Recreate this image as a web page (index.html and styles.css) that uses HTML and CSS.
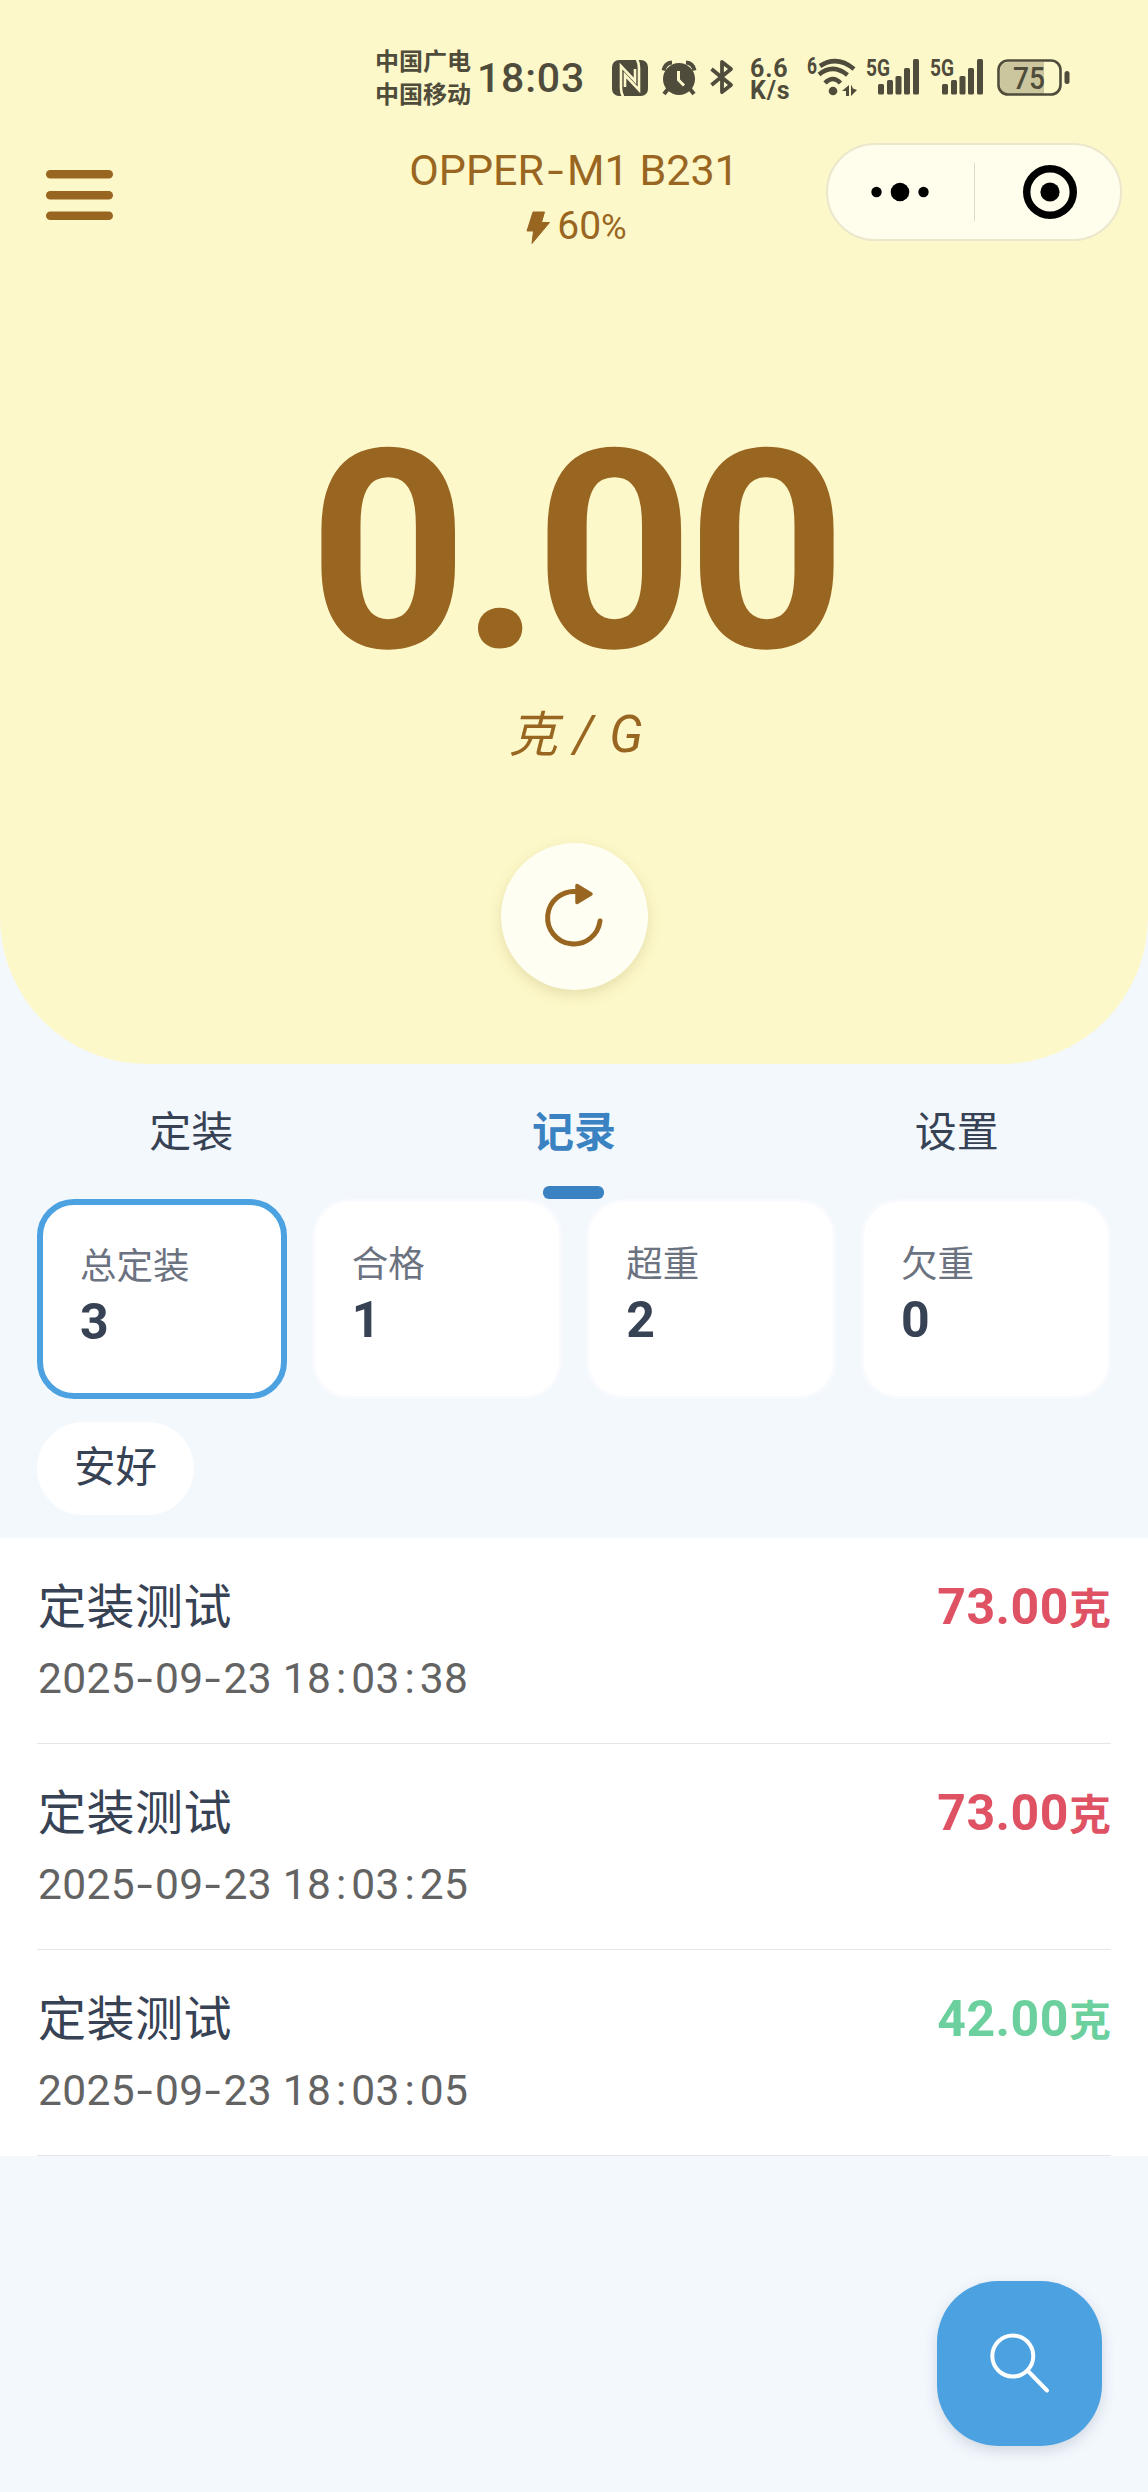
FILE: index.html
```html
<!DOCTYPE html>
<html lang="zh-CN">
<head>
<meta charset="utf-8">
<title>OPPER-M1 B231</title>
<link rel="stylesheet" href="styles.css">
</head>
<body>
<main class="app">
  <section class="hero">
    <div class="status">
      <div class="carriers"><span>中国广电</span><span>中国移动</span></div>
      <div class="clock">18:03</div>
      <svg class="nfc" width="36" height="36" viewBox="0 0 36 36">
        <rect width="36" height="36" rx="7" fill="currentColor"/>
        <g fill="none" stroke="#fdf8c9" stroke-width="2.600">
          <path d="M11 36.500Q9 33 9 28V6L23 21V9"/>
          <path d="M25 -.5Q27 3 27 8V30L13 15V27"/>
        </g>
      </svg>
      <svg class="alarm" width="36" height="36" viewBox="0 0 36 36">
        <path d="M2.500 10.500Q4 3 11 2.500M33.500 10.500Q32 3 25 2.500" fill="none" stroke="currentColor" stroke-width="4"/>
        <path d="M7 29l-4 5M29 29l4 5" stroke="currentColor" stroke-width="4"/>
        <circle cx="18" cy="19" r="16" fill="currentColor"/>
        <path d="M17.500 11v9l5.500 5.500" fill="none" stroke="#fdf8c9" stroke-width="3"/>
      </svg>
      <svg class="bluetooth" width="24" height="36" viewBox="0 0 24 36">
        <path d="M1.500 10L21 26 12 33V3l9 7L1.500 26" fill="none" stroke="currentColor" stroke-width="3.800" stroke-linejoin="round"/>
      </svg>
      <div class="speed"><span>6.6</span><span>K/s</span></div>
      <svg class="wifi" width="50" height="40" viewBox="0 0 50 40">
        <text x="0" y="16" class="tag" textLength="10" lengthAdjust="spacingAndGlyphs">6</text>
        <g fill="none" stroke="currentColor" stroke-width="4.500">
          <path d="M13 8Q30-3 47 11"/>
          <path d="M12 16.500Q26 5 40.500 17"/>
          <path d="M18 25Q26 17 33.500 25"/>
        </g>
        <circle cx="26" cy="33" r="4.300" fill="currentColor"/>
        <path d="M42 27v11h-3v-5h-4zM44 38V26.500l2 4 4 1.500z" fill="currentColor"/>
      </svg>
      <svg class="signal" width="54" height="38" viewBox="0 0 54 38">
        <text x="0" y="18" class="tag" textLength="24" lengthAdjust="spacingAndGlyphs">5G</text>
        <g fill="currentColor">
          <rect x="12" y="26" width="6" height="10.500" rx="1.500"/><rect x="21" y="22" width="6" height="14.500" rx="1.500"/><rect x="29.500" y="18" width="6" height="18.500" rx="1.500"/><rect x="38" y="10" width="6" height="26.500" rx="1.500"/><rect x="47" y="1" width="6" height="35.500" rx="1.500"/>
        </g>
      </svg>
      <svg class="signal" width="54" height="38" viewBox="0 0 54 38">
        <text x="0" y="18" class="tag" textLength="24" lengthAdjust="spacingAndGlyphs">5G</text>
        <g fill="currentColor">
          <rect x="12" y="26" width="6" height="10.500" rx="1.500"/><rect x="21" y="22" width="6" height="14.500" rx="1.500"/><rect x="29.500" y="18" width="6" height="18.500" rx="1.500"/><rect x="38" y="10" width="6" height="26.500" rx="1.500"/><rect x="47" y="1" width="6" height="35.500" rx="1.500"/>
        </g>
      </svg>
      <svg class="battery" width="74" height="38" viewBox="0 0 74 38">
        <path d="M12 3h35v32H12Q3 35 3 26V12Q3 3 12 3z" fill="#cbc69e"/>
        <rect x="1.500" y="1.500" width="62" height="34" rx="9.500" fill="none" stroke="currentColor" stroke-width="2.600"/>
        <rect x="67.500" y="12" width="5" height="13" rx="2.500" fill="currentColor"/>
        <text x="16" y="29.500" class="level" textLength="32" lengthAdjust="spacingAndGlyphs">75</text>
      </svg>
    </div>

    <header class="nav">
      <svg class="menu" width="67" height="51" viewBox="0 0 67 51" fill="#996622">
        <rect y="0" width="67" height="8.500" rx="4.250"/><rect y="21" width="67" height="8.500" rx="4.250"/><rect y="41.500" width="67" height="8.500" rx="4.250"/>
      </svg>
      <div class="device">
        <h1 class="name">OPPER<i class="dash">-</i>M1 B231</h1>
        <div class="charge">
          <svg width="25" height="33" viewBox="0 0 25 33"><path d="M7 1h11.500l-3 10.500H23.500L6 32.500 7.500 20H1z" fill="#996622" stroke="#996622" stroke-width="1" stroke-linejoin="round"/></svg>
          <span>60<small>%</small></span>
        </div>
      </div>
      <div class="capsule">
        <svg width="58" height="20" viewBox="0 0 58 20"><circle cx="5.500" cy="10" r="5.200"/><circle cx="29" cy="10" r="9.300"/><circle cx="52.500" cy="10" r="5.200"/></svg>
        <i class="split"></i>
        <svg width="54" height="54" viewBox="0 0 54 54"><circle cx="27" cy="27" r="23.300" fill="none" stroke="#000" stroke-width="7.400"/><circle cx="27" cy="27" r="9.600"/></svg>
      </div>
    </header>

    <div class="weight">0.00</div>
    <div class="unit"><span class="han">克</span> / G</div>
    <button class="reset" aria-label="归零">
      <svg width="62" height="68" viewBox="0 0 62 68">
        <path d="M33 8.500A26.300 26.300 0 1 0 57 38" fill="none" stroke="#996622" stroke-width="5" stroke-linecap="round"/>
        <path d="M34 2.500v17L48 11z" fill="#996622" stroke="#996622" stroke-width="3.500" stroke-linejoin="round"/>
      </svg>
    </button>
  </section>

  <nav class="tabs">
    <a class="tab">定装</a>
    <a class="tab active">记录</a>
    <a class="tab">设置</a>
  </nav>

  <section class="stats">
    <div class="stat selected"><span class="label">总定装</span><b>3</b></div>
    <div class="stat"><span class="label">合格</span><b>1</b></div>
    <div class="stat"><span class="label">超重</span><b>2</b></div>
    <div class="stat"><span class="label">欠重</span><b>0</b></div>
  </section>

  <div class="chips"><span class="chip">安好</span></div>

  <ul class="records">
    <li class="record">
      <div><div class="title">定装测试</div><time>2025<i class="dash">-</i>09<i class="dash">-</i>23 18<i>:</i>03<i>:</i>38</time></div>
      <div class="amount over">73.00<span>克</span></div>
    </li>
    <li class="record">
      <div><div class="title">定装测试</div><time>2025<i class="dash">-</i>09<i class="dash">-</i>23 18<i>:</i>03<i>:</i>25</time></div>
      <div class="amount over">73.00<span>克</span></div>
    </li>
    <li class="record">
      <div><div class="title">定装测试</div><time>2025<i class="dash">-</i>09<i class="dash">-</i>23 18<i>:</i>03<i>:</i>05</time></div>
      <div class="amount ok">42.00<span>克</span></div>
    </li>
  </ul>

  <button class="search" aria-label="搜索">
    <svg width="60" height="60" viewBox="0 0 60 60" fill="none" stroke="#fff" stroke-width="4" stroke-linecap="round">
      <circle cx="22.800" cy="22" r="20.500"/><path d="M38 37l19 19.500"/>
    </svg>
  </button>
</main>
</body>
</html>
```
FILE: styles.css
```css
* { box-sizing: border-box; margin: 0; padding: 0; }
body { background: #f3f8fd; }
.app {
  position: relative;
  width: 1148px;
  height: 2492px;
  overflow: hidden;
  font-family: Roboto, "Noto Sans CJK SC", sans-serif;
  color: #374255;
}
svg { display: block; flex: none; overflow: visible; }
button { border: 0; }

.hero {
  height: 1064px;
  background: #fdf8c9;
  border-radius: 0 0 147px 147px;
  color: #996622;
  display: flex;
  flex-direction: column;
  align-items: center;
}

/* system status bar */
.status {
  align-self: stretch;
  height: 119px;
  padding: 40px 0 0 375px;
  display: flex;
  align-items: flex-start;
  color: #4f4c3b;
}
.carriers {
  width: 102px;
  margin-top: 3px;
  display: flex;
  flex-direction: column;
  font: 700 24px/33px "Noto Sans CJK SC", sans-serif;
  white-space: nowrap;
}
.clock { width: 135px; margin-top: 13px; font-weight: 500; font-size: 41px; line-height: 50px; letter-spacing: .8px; }
.nfc { margin-top: 20px; }
.alarm { margin: 20px 0 0 13px; }
.bluetooth { margin: 19px 0 0 13px; }
.speed {
  width: 57px;
  margin: 18px 0 0 16px;
  display: flex;
  flex-direction: column;
  font-weight: 700;
  font-size: 25px;
  line-height: 22px;
  letter-spacing: .8px;
}
.wifi { margin-top: 18px; }
.tag { font: 700 23px Roboto, sans-serif; fill: currentColor; }
.level { font: 500 32px Roboto, sans-serif; fill: currentColor; }
.signal { margin: 18px 0 0 10px; }
.wifi + .signal { margin-left: 9px; }
.battery { margin: 19px 0 0 13px; }

/* navigation row */
.nav {
  align-self: stretch;
  height: 150px;
  padding: 0 27px 0 46px;
  display: grid;
  grid-template-columns: 295px 1fr 295px;
  align-items: start;
}
.menu { margin-top: 51px; }
.device { display: flex; flex-direction: column; align-items: center; margin-left: -19px; }
.name { margin-top: 26px; font-weight: 400; font-size: 43px; line-height: 50px; white-space: nowrap; }
.name .dash { width: 23px; text-align: center; }
.charge { display: flex; align-items: center; gap: 6px; margin: 6px 0 0 5px; font-size: 39px; line-height: 50px; }
.charge small { font-size: 35px; }
.capsule {
  width: 296px;
  height: 98px;
  margin-top: 24px;
  padding: 0 43px 0 43px;
  display: flex;
  align-items: center;
  border: 2px solid #ebe7cc;
  border-radius: 49px;
  background: #fffdeb;
}
.split { width: 2px; height: 58px; margin: 0 48px 0 45px; background: #dedbc5; }

/* live reading */
.weight { margin-top: 120px; font-weight: 700; font-size: 278px; line-height: 326px; letter-spacing: -7px; }
.unit { margin: -10px 0 0 5px; font-style: italic; font-size: 51px; line-height: 60px; white-space: pre; letter-spacing: 1.500px; }
.han { font-size: 49px; }
.reset {
  width: 147px;
  height: 147px;
  margin-top: 77px;
  display: grid;
  place-items: center;
  border-radius: 50%;
  background: #fffef2;
  box-shadow: 0 5px 14px rgba(100, 90, 20, .15);
}

.tabs { height: 135px; display: grid; grid-template-columns: repeat(3, 1fr); }
.tab {
  display: flex;
  flex-direction: column;
  align-items: center;
  padding-top: 39px;
  font-size: 42px;
  line-height: 60px;
}
.tab.active { color: #3a82c1; font-weight: 700; }
.tab.active::after { content: ""; width: 61px; height: 13px; margin-top: 23px; border-radius: 6px; background: #3a82c1; }

.stats { padding: 0 37px; display: grid; grid-template-columns: repeat(4, 1fr); column-gap: 24.600px; }
.stat {
  height: 200px;
  padding: 41px 37px 0;
  display: flex;
  flex-direction: column;
  border: 3px solid #f8fafd;
  border-radius: 37px;
  background: #fff;
}
.stat.selected { padding-top: 40px; border: 6px solid #4ca1e1; }
.label { font-size: 36.500px; line-height: 44px; color: #6b7280; }
.stat b { margin-top: 3px; font-size: 50px; line-height: 60px; }

.chips { padding: 23px 37px; display: flex; }
.chip { height: 93px; padding: 0 37px; border-radius: 47px; background: #fff; font-size: 41.500px; line-height: 91px; }

.records { list-style: none; height: 618px; padding: 0 37px; background: #fff; }
.record {
  height: 206px;
  padding-top: 34px;
  display: flex;
  justify-content: space-between;
  align-items: flex-start;
  border-bottom: 1px solid #e5e6e9;
}
.title { padding: 4px 0 0 1px; font-size: 48px; line-height: 64px; letter-spacing: .5px; }
time { display: block; margin-top: 14px; padding-left: 1px; font-size: 42.500px; line-height: 50px; color: #636363; letter-spacing: .35px; }
time i { display: inline-block; width: 20px; text-align: center; font-style: normal; }
.dash { display: inline-block; font-style: normal; transform: scaleX(1.35); }
.amount { display: flex; align-items: baseline; font-weight: 700; font-size: 50px; line-height: 70px; letter-spacing: .5px; }
.amount span { font-size: 42px; letter-spacing: 0; }
.over { color: #df5263; }
.ok { color: #6bd09d; }

.search {
  position: absolute;
  left: 937px;
  top: 2281px;
  width: 165px;
  height: 165px;
  display: grid;
  place-items: center;
  border-radius: 61px;
  background: #4ca1e1;
  box-shadow: 0 5px 14px rgba(50, 70, 100, .18);
}
```
